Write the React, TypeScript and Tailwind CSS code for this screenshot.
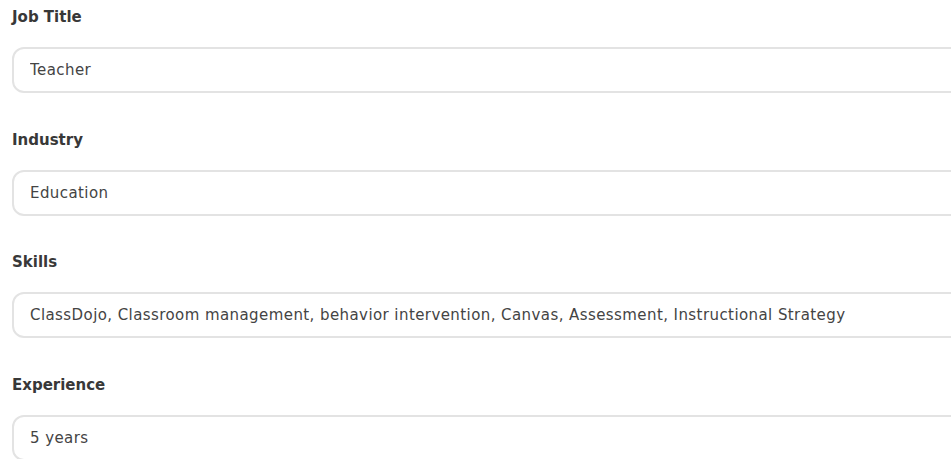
const fields = [
  { label: "Job Title", value: "Teacher" },
  { label: "Industry", value: "Education" },
  { label: "Skills", value: "ClassDojo, Classroom management, behavior intervention, Canvas, Assessment, Instructional Strategy" },
  { label: "Experience", value: "5 years" },
];

function Field({ label, value }: { label: string; value: string }) {
  return (
    <div className="flex flex-col mb-[36.7px]">
      <label className="h-5 leading-5 text-[15px] font-semibold text-[#383838]">
        {label}
      </label>
      <input
        readOnly
        value={value}
        className="mt-[20px] h-[46px] w-[1000px] rounded-[12px] border-2 border-[#e3e3e3] bg-white pl-4 text-[15px] text-[#444444] tracking-[0.42px] outline-none"
      />
    </div>
  );
}

export default function App() {
  return (
    <div
      className="w-[951px] h-[459px] overflow-hidden bg-white pt-[7px] pl-3"
      style={{ fontFamily: "'DejaVu Sans', sans-serif" }}>
      {fields.map((f) => (
        <Field key={f.label} label={f.label} value={f.value} />
      ))}
    </div>
  );
}
